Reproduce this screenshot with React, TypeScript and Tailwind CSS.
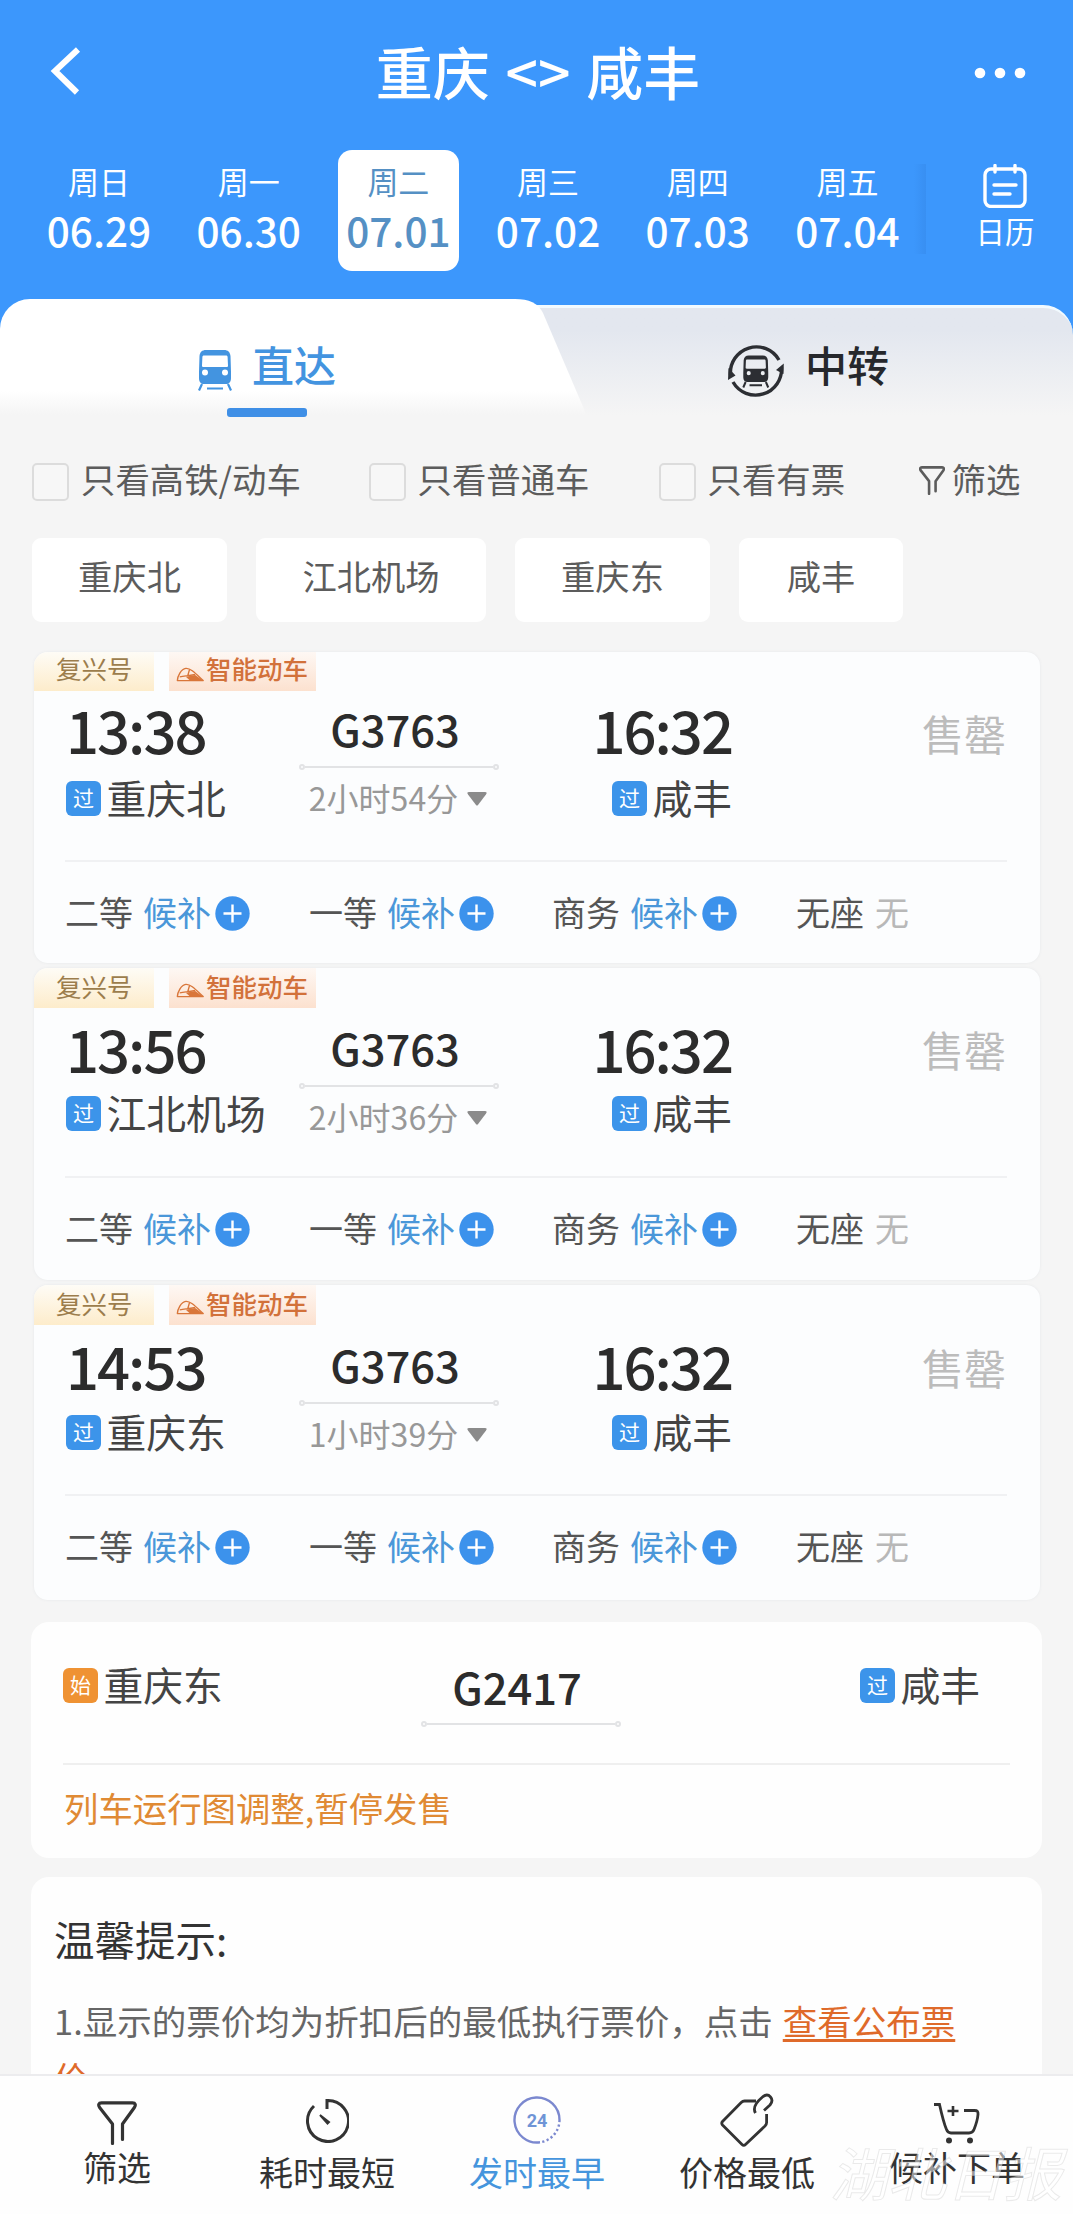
import React from "react";
import clsx from "clsx";

interface Train {
  code: string;
  depart: string;
  arrive: string;
  from: string;
  to: string;
  duration: string;
  cardClass: string;
  tagClass: string;
  bodyClass: string;
  stationClass: string;
  soldOutClass: string;
  dividerClass: string;
}

const days = [
  { week: "周日", date: "06.29" },
  { week: "周一", date: "06.30" },
  { week: "周二", date: "07.01", active: true },
  { week: "周三", date: "07.02" },
  { week: "周四", date: "07.03" },
  { week: "周五", date: "07.04" },
];

const stations = [
  { name: "重庆北", width: "w-[195px]" },
  { name: "江北机场", width: "w-[230px]" },
  { name: "重庆东", width: "w-[195px]" },
  { name: "咸丰", width: "w-[164px]" },
];

const trains: Train[] = [
  {
    code: "G3763",
    depart: "13:38",
    arrive: "16:32",
    from: "重庆北",
    to: "咸丰",
    duration: "2小时54分",
    cardClass: "h-[311px]",
    tagClass: "h-[39px] leading-[32px]",
    bodyClass: "pt-0",
    stationClass: "mt-[20px]",
    soldOutClass: "pt-[21px]",
    dividerClass: "mt-[14px]",
  },
  {
    code: "G3763",
    depart: "13:56",
    arrive: "16:32",
    from: "江北机场",
    to: "咸丰",
    duration: "2小时36分",
    cardClass: "h-[312px]",
    tagClass: "h-[40px] leading-[36px]",
    bodyClass: "pt-[2px]",
    stationClass: "mt-[16px]",
    soldOutClass: "pt-[18px]",
    dividerClass: "mt-[13px]",
  },
  {
    code: "G3763",
    depart: "14:53",
    arrive: "16:32",
    from: "重庆东",
    to: "咸丰",
    duration: "1小时39分",
    cardClass: "h-[315px]",
    tagClass: "h-[40px] leading-[35px]",
    bodyClass: "pt-[2px]",
    stationClass: "mt-[18px]",
    soldOutClass: "pt-[19px]",
    dividerClass: "mt-[14px]",
  },
];

const TrainIcon = ({ className }: { className?: string }) => (
  <svg viewBox="0 0 34 41" className={className} fill="currentColor">
    <path
      fillRule="evenodd"
      d="M8 0h18c4 0 6 2 6.500 6L33 22v6c0 4-2 6-5 6H6c-3 0-5-2-5-6v-6L1.500 6C2 2 4 0 8 0ZM6 5.500c-1 0-1.500.500-1.600 1.500L4 15.500c0 1 .500 1.500 1.500 1.500h23c1 0 1.500-.500 1.500-1.500L29.600 7c-.1-1-.600-1.500-1.600-1.500ZM7 19.500a3 3 0 1 0 0 6 3 3 0 0 0 0-6Zm20 0a3 3 0 1 0 0 6 3 3 0 0 0 0-6Z"
    />
    <path d="M4 34 1 40.500M30 34l3 6.500M9 38.500h16" stroke="currentColor" strokeWidth="2.200" fill="none" />
  </svg>
);

const TransferIcon = () => (
  <svg viewBox="0 0 56 56" className="h-[56px] w-[56px] text-[#2c2e33]" fill="none" stroke="currentColor">
    <path d="M2.500 32A26 26 0 0 1 51 17" strokeWidth="3.400" />
    <path d="M53.500 24A26 26 0 0 1 5 39" strokeWidth="3.400" />
    <path d="M0 37 .500 25l7 7.500ZM55.800 20.500 55.500 31 48 27Z" fill="currentColor" stroke="none" />
    <g fill="currentColor" stroke="none" transform="translate(14.500 12.500) scale(.78)">
      <path
        fillRule="evenodd"
        d="M8 0h18c4 0 6 2 6.500 6L33 22v6c0 4-2 6-5 6H6c-3 0-5-2-5-6v-6L1.500 6C2 2 4 0 8 0ZM6 5c-1 0-1.500.500-1.600 1.500L4 15.500c0 1 .500 1.500 1.500 1.500h23c1 0 1.500-.500 1.500-1.500L29.600 6.500C29.500 5.500 29 5 28 5ZM8 20a2.600 2.600 0 1 0 0 5.200A2.600 2.600 0 0 0 8 20Zm18 0a2.600 2.600 0 1 0 0 5.200 2.600 2.600 0 0 0 0-5.200Z"
      />
      <path d="M4 34 1 41M30 34l3 7M9 38h16" stroke="currentColor" strokeWidth="2.600" />
    </g>
  </svg>
);

const FunnelIcon = ({ className }: { className?: string }) => (
  <svg viewBox="0 0 40 44" className={className} fill="none" stroke="currentColor" strokeLinecap="round" strokeLinejoin="round">
    <path d="M15.500 42.500V23L2.600 6.500C1 4 1.500 1.800 4.500 1.800h31c3 0 3.500 2.200 1.900 4.700L25.500 23v15.500" />
  </svg>
);

const BulletTrainIcon = () => (
  <svg viewBox="0 0 30 16" className="h-[15px] w-[29px]" fill="none" stroke="#d9763a" strokeWidth="1.500">
    <path d="M1 14.500C1 10 5 2 10 1.500c5-.500 10 5 18.500 13Z" strokeLinejoin="round" />
    <path d="M3.500 10.500C9 9.500 11 9.500 20 8M14 2.500 12 9.500" />
    <path d="M10 10.500 20 8.500l9 6.500H15Z" fill="#d9763a" stroke="none" />
  </svg>
);

const Badge = ({ text, start }: { text: string; start?: boolean }) => (
  <span
    className={clsx(
      "flex h-[35px] w-[35px] items-center justify-center rounded-[6px] pb-[2px] text-[21px] leading-none text-white",
      start ? "bg-[#ef9233]" : "bg-[#3c94ea]",
    )}
  >
    {text}
  </span>
);

const Station = ({ name, start }: { name: string; start?: boolean }) => (
  <div className="flex h-[40px] items-center gap-[5.500px]">
    <Badge text={start ? "始" : "过"} start={start} />
    <span className="pb-[3px] text-[39.800px] leading-none text-[#444]">{name}</span>
  </div>
);

// thin line with a small ring on both ends
const RouteLine = () => (
  <div className="flex h-[6px] w-[200px] items-center">
    <span className="h-[6px] w-[6px] rounded-full border-2 border-[#e2e3e5]" />
    <span className="h-[2px] flex-1 bg-[#e2e3e5]" />
    <span className="h-[6px] w-[6px] rounded-full border-2 border-[#e2e3e5]" />
  </div>
);

const Time = ({ value }: { value: string }) => (
  <div className="pt-[9px] text-[58px] leading-none font-medium tracking-[-2px] text-[#2c2c2c]">{value}</div>
);

const Seat = ({ name, width }: { name: string; width: string }) => (
  <div className={clsx("flex items-center", width)}>
    <span className="pb-[4px] text-[34px] leading-none text-[#555]">{name}</span>
    <span className="ml-[10px] pb-[4px] text-[34px] leading-none text-[#4a97d9]">候补</span>
    <svg viewBox="0 0 35 35" className="ml-[4px] h-[35px] w-[35px]">
      <circle cx="17.500" cy="17.500" r="17.200" fill="#3c92ec" />
      <path d="M17.500 8.500v18M8.500 17.500h18" stroke="#fff" strokeWidth="2.400" />
    </svg>
  </div>
);

const TrainCard = ({ train }: { train: Train }) => (
  <div className={clsx("rounded-[14px] bg-[#fcfdfe] shadow-[0_0_3px_#e6e8ea]", train.cardClass)}>
    <div className={clsx("flex gap-[15px] text-[25.500px]", train.tagClass)}>
      <span className="w-[120px] rounded-tl-[14px] bg-linear-to-b from-[#fefcf6] to-[#fdeccb] pl-[22px] text-[#9c7d4c]">
        复兴号
      </span>
      <span className="flex w-[147px] items-start bg-linear-to-b from-[#fef8f4] to-[#fce1cf] pl-[7px]">
        <span className="pt-[15px] leading-none">
          <BulletTrainIcon />
        </span>
        <span className="ml-[1px] font-medium text-[#d2713a]">智能动车</span>
      </span>
    </div>
    <div className={clsx("flex h-[127px] pl-[32px] pr-[34px]", train.bodyClass)}>
      <div className="w-[233px]">
        <Time value={train.depart} />
        <div className={train.stationClass}>
          <Station name={train.from} />
        </div>
      </div>
      <div className="flex w-[200px] flex-col items-center">
        <div className="pt-[16px] pr-[8px] text-[43.500px] leading-none font-medium text-[#2c2c2c]">{train.code}</div>
        <div className="mt-[13.500px]">
          <RouteLine />
        </div>
        <div className="mt-[11px] flex items-center gap-[9px] pr-[2px]">
          <span className="text-[32px] leading-none text-[#989898]">{train.duration}</span>
          <svg viewBox="0 0 20 14" className="mt-[4px] h-[14px] w-[20px]">
            <path d="M2 0h16c2 0 2 1 1 2.500L11 13q-1 1-2 0L1 2.500C0 1 0 0 2 0Z" fill="#8b8b8b" />
          </svg>
        </div>
      </div>
      <div className="flex w-[233px] flex-col items-end">
        <Time value={train.arrive} />
        <div className={train.stationClass}>
          <Station name={train.to} />
        </div>
      </div>
      <div className={clsx("flex-1 text-right text-[42px] leading-none text-[#bcbcbc]", train.soldOutClass)}>售罄</div>
    </div>
    <div className={clsx("pl-[31px] pr-[33px] pt-[28px]", train.dividerClass)}>
      <div className="h-[2px] bg-[#f0f1f3]" />
      <div className="mt-[34px] flex h-[35px] items-center">
        <Seat name="二等" width="w-[244px]" />
        <Seat name="一等" width="w-[243px]" />
        <Seat name="商务" width="w-[244px]" />
        <div className="pb-[4px] text-[34px] leading-none text-[#555]">
          无座<span className="ml-[11px] text-[#b8b8b8]">无</span>
        </div>
      </div>
    </div>
  </div>
);

const Header = () => (
  <header className="h-[299px] bg-[#3c97fc] text-white">
    <div className="flex h-[140px] items-center justify-between pl-[50px] pr-[47px] pt-[2px]">
      <svg viewBox="0 0 32 48" className="h-[48px] w-[52px]" preserveAspectRatio="xMinYMid meet">
        <path d="M28 2.500 5 24l22 21.500" stroke="#fff" strokeWidth="6" fill="none" />
      </svg>
      <h1 className="pb-[2px] text-[57px] leading-none font-medium [word-spacing:3px]">重庆 &lt;&gt; 咸丰</h1>
      <svg viewBox="0 0 52 12" className="mt-[3px] h-[12px] w-[52px]" fill="#fff">
        <circle cx="6" cy="6" r="5.300" />
        <circle cx="26" cy="6" r="5.300" />
        <circle cx="46" cy="6" r="5.300" />
      </svg>
    </div>
    <div className="flex pl-[39px] pt-[10px]">
      <div className="flex gap-[28.700px]">
        {days.map((day) => (
          <div
            key={day.date}
            className={clsx(
              "flex h-[121px] w-[121px] flex-col items-center gap-[14px] rounded-[14px] pt-[15px]",
              day.active && "bg-white text-[#5590c4]",
            )}
          >
            <span className="pr-[1px] text-[31px] leading-none">{day.week}</span>
            <span className="pr-[1px] text-[40.500px] leading-none font-medium">{day.date}</span>
          </div>
        ))}
      </div>
      <div className="ml-[6px] mt-[14px] h-[90px] w-[12px] bg-linear-to-r from-[#3c97fc] to-[#388ff2]" />
      <div className="ml-[49px] flex flex-col items-center pt-[14px]">
        <svg viewBox="0 0 44 44" className="h-[44px] w-[44px]" fill="none" stroke="#fff" strokeWidth="3.400" strokeLinecap="round">
          <rect x="2" y="5" width="40" height="37.500" rx="6" />
          <path d="M12 1.500V8M32 1.500V8M11 21h22M11 30h16" />
        </svg>
        <span className="mt-[8px] text-[29.500px] leading-none">日历</span>
      </div>
    </div>
  </header>
);

const Tabs = () => (
  <div className="flex h-[122px] bg-[#3c97fc]">
    <div className="relative z-10 w-[515px] rounded-tl-[30px] bg-linear-to-b from-white from-75% to-[#f5f5f5] to-95%">
      <div className="flex items-start gap-[20px] pl-[198px] pt-[44px] text-[#4394e0]">
        <TrainIcon className="mt-[7px] h-[41px] w-[34px]" />
        <span className="text-[42px] leading-none font-medium">直达</span>
      </div>
      <div className="ml-[227px] mt-[17px] h-[9px] w-[80px] rounded-[3px] bg-[#3f8fe6]" />
      <svg viewBox="0 0 76 122" className="absolute left-full top-0 h-[122px] w-[76px]">
        <defs>
          <linearGradient id="tabFade" x1="0" y1="0" x2="0" y2="1">
            <stop offset=".75" stopColor="#fff" />
            <stop offset=".95" stopColor="#f5f5f5" />
          </linearGradient>
        </defs>
        <path d="M0 0C14 0 23 4 28 14L69 110 73 122H0Z" fill="url(#tabFade)" />
      </svg>
    </div>
    <div className="mt-[6px] flex flex-1 gap-[21px] rounded-tr-[30px] border-t-[3px] border-[#f2faff] bg-linear-to-b from-[#e3e7ef] from-20% to-[#f5f5f5] to-95% pl-[213px]">
      <div className="pt-[35px]">
        <TransferIcon />
      </div>
      <span className="pt-[35px] text-[42px] leading-none font-medium text-[#26282c]">中转</span>
    </div>
  </div>
);

const CheckOption = ({ label, width }: { label: string; width: string }) => (
  <label className={clsx("flex items-center gap-[12px]", width)}>
    <span className="h-[38px] w-[37px] rounded-[5px] border-[2.500px] border-[#dcdcdc] bg-[#f7f7f7]" />
    <span className="pb-[7px] text-[34.400px] leading-none text-[#5c5c5c]">{label}</span>
  </label>
);

const Filters = () => (
  <div className="px-[32px]">
    <div className="flex h-[38px] items-center whitespace-nowrap">
      <CheckOption label="只看高铁/动车" width="w-[336.500px]" />
      <CheckOption label="只看普通车" width="w-[290px]" />
      <CheckOption label="只看有票" width="w-[260px]" />
      <FunnelIcon className="-mt-[3px] h-[29px] w-[26px] stroke-[4] text-[#5c5c5c]" />
      <span className="ml-[7px] pb-[7px] text-[34.400px] leading-none text-[#5c5c5c]">筛选</span>
    </div>
    <div className="mt-[37px] flex gap-[29px]">
      {stations.map((s) => (
        <div
          key={s.name}
          className={clsx("flex h-[84px] items-center justify-center rounded-[9px] bg-white pb-[9px] text-[34.300px] text-[#5c5c5c]", s.width)}
        >
          {s.name}
        </div>
      ))}
    </div>
  </div>
);

const SuspendedCard = () => (
  <div className="h-[236px] shrink-0 rounded-[18px] bg-[#fefefe] px-[32px] pt-[43px]">
    <div className="flex h-[98px]">
      <div className="w-[358px]">
        <Station name="重庆东" start />
      </div>
      <div className="flex w-[200px] flex-col items-center">
        <span className="pr-[8px] text-[43.500px] leading-none font-medium text-[#2c2c2c]">G2417</span>
        <span className="mt-[12px]">
          <RouteLine />
        </span>
      </div>
      <div className="mr-[30px] flex flex-1 justify-end">
        <Station name="咸丰" />
      </div>
    </div>
    <div className="h-[2px] bg-[#efefef]" />
    <div className="ml-[1px] pt-[25px] text-[34.400px] leading-none text-[#e08a34]">列车运行图调整,暂停发售</div>
  </div>
);

const Tips = () => (
  <div className="h-[400px] shrink-0 rounded-t-[18px] bg-[#fefefe] pl-[23px] pt-[42px]">
    <h2 className="text-[40.500px] leading-none text-[#333]">温馨提示:</h2>
    <p className="mt-[32px] w-[930px] text-[34.500px] leading-[57px] text-[#666]">
      1.显示的票价均为折扣后的最低执行票价，点击
      <a className="ml-[10px] text-[#df6a2a] underline decoration-[3px] underline-offset-[4px]">查看公布票价</a>
    </p>
  </div>
);

const NavItem = ({
  label,
  active,
  low,
  children,
}: {
  label: string;
  active?: boolean;
  low?: boolean;
  children: React.ReactNode;
}) => (
  <div className={clsx("flex w-[210px] flex-col items-center", active ? "text-[#4595dd]" : "text-[#333]")}>
    <div className="flex h-[59px] items-end">{children}</div>
    <span className={clsx("text-[34px] leading-none", low ? "mt-[12px]" : "mt-[7px]")}>{label}</span>
  </div>
);

const BottomNav = () => (
  <nav className="relative flex h-[140px] shrink-0 border-t-2 border-[#ececee] bg-[#fefefe] pl-[12px] pt-[8px]">
    <NavItem label="筛选">
      <FunnelIcon className="mb-[-2px] h-[44px] w-[40px] stroke-[3.200]" />
    </NavItem>
    <NavItem label="耗时最短" low>
      <svg viewBox="0 0 44 45" className="h-[45px] w-[44px]" fill="none" stroke="currentColor" strokeWidth="3">
        <path d="M9 8A20.500 20.500 0 1 0 22 2.500V11" />
        <path d="m15 17 9 7-1.500 1.500Z" fill="currentColor" strokeWidth="2" />
      </svg>
    </NavItem>
    <NavItem label="发时最早" active low>
      <svg viewBox="0 0 48 48" className="mb-[-1px] h-[48px] w-[48px]" fill="none" stroke="#7b88cf" strokeWidth="2.400">
        <path d="M27 46.300A22.500 22.500 0 1 1 46.500 24" />
        <path d="M46.500 24A22.500 22.500 0 0 1 27 46.300" strokeDasharray="2.200 2.400" />
        <text x="24" y="30.500" textAnchor="middle" fontSize="18" fontWeight="700" fontFamily="Roboto, sans-serif" fill="#6f94d6" stroke="none">
          24
        </text>
      </svg>
    </NavItem>
    <NavItem label="价格最低" low>
      <svg viewBox="0 0 54 54" className="mb-[-4px] h-[54px] w-[54px]" fill="none" stroke="currentColor" strokeWidth="2.800" strokeLinejoin="round">
        <path d="M36 8H24.500c-1.500 0-2.300.500-3.300 1.500L2.500 28.500c-1 1.200-1 2.300 0 3.500L22 51.500c1.200 1.200 2.300 1.200 3.500 0L45 33c1-1 1.600-2 1.600-3.500V21" />
        <path d="M35.500 20c-3-5 1-11 7-16 3-2.500 6-2.300 8 0s2 5-.500 8L44 17.500" />
      </svg>
    </NavItem>
    <NavItem label="候补下单">
      <svg viewBox="0 0 46 42" className="mb-[-1px] h-[42px] w-[46px]" fill="none" stroke="currentColor" strokeWidth="2.800">
        <path d="M0 2.500h5.500c2 9 4 18 7 25 1 2.500 2 3.500 4.500 3.500h18c3 0 4-1 5-3.500 2-5 3.500-9 4-15 .200-3-.500-4-3.500-4H30" />
        <path d="M19 4v10M13.500 9h11" strokeWidth="2.600" />
        <circle cx="15" cy="38.500" r="3" fill="currentColor" stroke="none" />
        <circle cx="36" cy="38.500" r="3" fill="currentColor" stroke="none" />
      </svg>
    </NavItem>
    <span className="pointer-events-none absolute left-[830px] top-[66px] text-[58px] leading-none italic whitespace-nowrap text-white/50 [-webkit-text-stroke:1px_rgba(190,190,190,0.3)]">
      湖北日报
    </span>
  </nav>
);

const App: React.FC = () => {
  return (
    <div className="flex h-[2214px] w-[1073px] flex-col overflow-hidden bg-[#f5f5f5] font-['Noto_Sans_CJK_SC',sans-serif]">
      <Header />
      <Tabs />
      <main className="flex min-h-0 flex-1 flex-col overflow-hidden pt-[42px]">
        <Filters />

        {/* Train list */}
        <div className="mt-[30px] flex flex-col gap-[5px] pl-[34px] pr-[33px]">
          {trains.map((train) => (
            <TrainCard key={train.depart} train={train} />
          ))}
        </div>

        <div className="mt-[22px] flex min-h-0 flex-1 flex-col gap-[19px] overflow-hidden px-[31px]">
          <SuspendedCard />
          <Tips />
        </div>
      </main>
      <BottomNav />
    </div>
  );
};

export default App;
